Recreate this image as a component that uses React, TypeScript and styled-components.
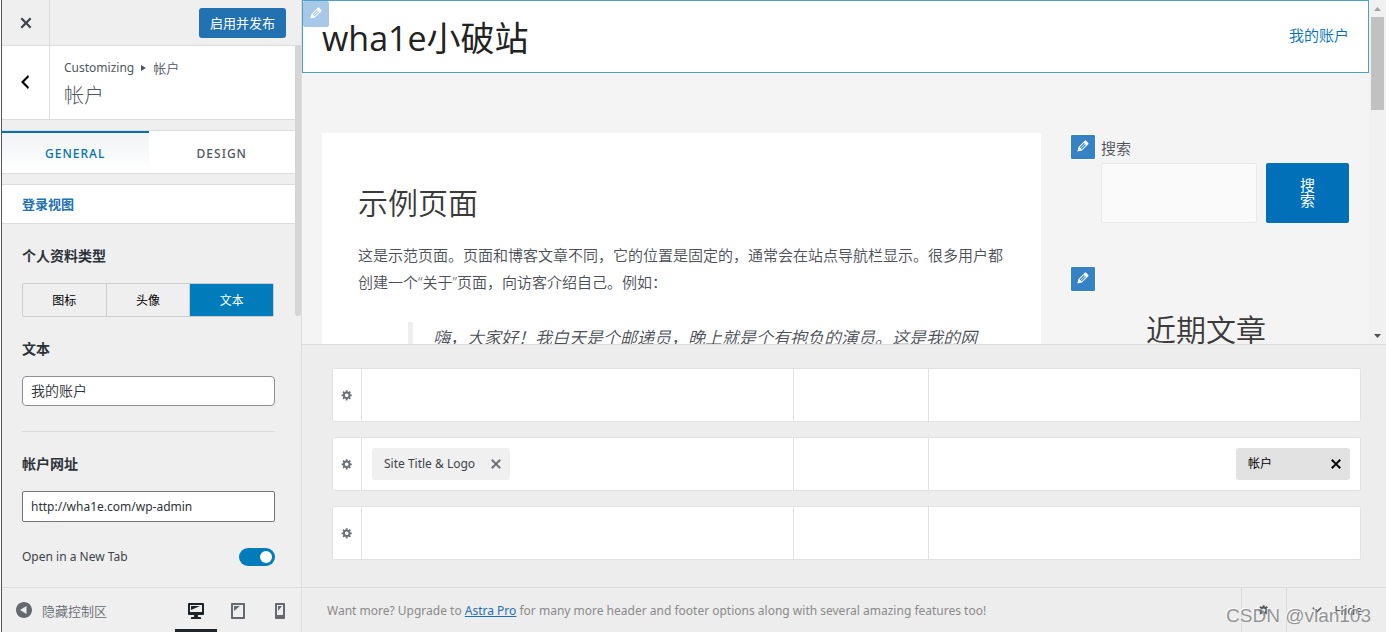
import React, { useState } from "react";
import styled, { createGlobalStyle } from "styled-components";

const GlobalStyle = createGlobalStyle`
  *, *::before, *::after { box-sizing: border-box; }
  body {
    margin: 0;
    background: #eeeeee;
    color: #3c434a;
    font-family: "Noto Sans", "Noto Sans CJK SC", sans-serif;
    font-size: 13px;
    line-height: 18px;
  }
  button, input { font-family: inherit; margin: 0; }
  button { cursor: pointer; }
  h1, h2, h3, p, blockquote { margin: 0; }
`;

/* ---------- icons ---------- */

const PATHS = {
  close:
    "M14.95 6.46L11.41 10l3.54 3.54-1.41 1.41L10 11.42l-3.53 3.53-1.42-1.42L8.58 10 5.05 6.47l1.42-1.42L10 8.58l3.54-3.53z",
  back: "M14 5l-5 5 5 5-1 2-7-7 7-7z",
  down: "M5 6l5 5 5-5 2 1-7 7-7-7z",
  desktop:
    "M3 2h14c.55 0 1 .45 1 1v10c0 .55-.45 1-1 1h-5v2h2c.55 0 1 .45 1 1v1H5v-1c0-.55.45-1 1-1h2v-2H3c-.55 0-1-.45-1-1V3c0-.55.45-1 1-1zm13 9V4H4v7h12zM5 5h9L5 9V5z",
  tablet:
    "M4 2h12c.55 0 1 .45 1 1v14c0 .55-.45 1-1 1H4c-.55 0-1-.45-1-1V3c0-.55.45-1 1-1zm11 14V4H5v12h10zM6 5h6l-6 5V5z",
  phone:
    "M6 2h8c.55 0 1 .45 1 1v14c0 .55-.45 1-1 1H6c-.55 0-1-.45-1-1V3c0-.55.45-1 1-1zm7 12V4H7v10h6zM8 5h4l-4 5V5z",
  gear: "M18 12h-2.18c-.17.7-.44 1.35-.81 1.93l1.54 1.54-2.1 2.1-1.54-1.54c-.58.36-1.23.63-1.91.79V19H8v-2.18c-.68-.16-1.33-.43-1.91-.79l-1.54 1.54-2.12-2.12 1.54-1.54c-.36-.58-.63-1.23-.79-1.91H1V9.03h2.17c.16-.7.44-1.35.8-1.94L2.43 5.55l2.1-2.1 1.54 1.54c.58-.37 1.24-.64 1.93-.81V2h3v2.18c.68.16 1.33.43 1.91.79l1.54-1.54 2.12 2.12-1.54 1.54c.36.59.64 1.24.8 1.94H18V12zm-8.5 1.5c1.66 0 3-1.34 3-3s-1.34-3-3-3-3 1.34-3 3 1.34 3 3 3z",
  edit: "M13.89 3.39l2.71 2.72c.46.46.42 1.24.03 1.64l-8.01 8.02-5.56 1.16 1.16-5.58s7.6-7.63 7.99-8.03c.39-.39 1.22-.39 1.68.07zm-2.73 2.79l-5.59 5.61 1.11 1.11 5.54-5.65zm-2.97 8.23l5.58-5.6-1.07-1.08-5.59 5.6z",
  collapse:
    "M10 2c4.42 0 8 3.58 8 8s-3.58 8-8 8-8-3.58-8-8 3.58-8 8-8zM12.5 6L6 10l6.5 4z",
};

const Svg = styled.svg`
  display: block;
  flex: none;
  fill: currentColor;
`;

const Icon = ({ name, size = 20 }: { name: keyof typeof PATHS; size?: number }) => (
  <Svg viewBox="0 0 20 20" width={size} height={size} aria-hidden="true">
    <path fillRule="evenodd" d={PATHS[name]} />
  </Svg>
);

/* ---------- shell ---------- */

const Shell = styled.div`
  display: flex;
  height: 100vh;
  min-height: 600px;
  overflow: hidden;
`;

const Sidebar = styled.aside`
  flex: none;
  display: flex;
  flex-direction: column;
  width: 302px;
  padding-left: 1px;
  background: #ffffff;
`;

const SidebarInner = styled.div`
  flex: 1;
  min-height: 0;
  display: flex;
  flex-direction: column;
  border-left: 1px solid #50575e;
  border-right: 1px solid #dcdcde;
  background: #efefef;
`;

const SidebarHeader = styled.header`
  flex: none;
  display: flex;
  align-items: center;
  justify-content: space-between;
  height: 46px;
  padding-right: 15px;
  border-bottom: 1px solid #dcdcde;
`;

const SideButton = styled.button`
  flex: none;
  display: flex;
  align-items: center;
  justify-content: center;
  align-self: stretch;
  width: 48px;
  padding: 0;
  border: 0;
  border-right: 1px solid #dcdcde;
  background: transparent;
  color: #3c434a;
`;

const BackButton = styled(SideButton)`
  padding: 0 2px 2px 0;
  color: #000000;
`;

const PublishButton = styled.button`
  height: 30px;
  padding: 0 11px;
  border: 0;
  border-radius: 3px;
  background: #2271b1;
  color: #ffffff;
  font-size: 13px;
  line-height: 30px;
`;

const Scroller = styled.div`
  flex: 1;
  min-height: 0;
  display: flex;
`;

const Panel = styled.div`
  flex: 1;
  min-width: 0;
  overflow: hidden;
`;

const PanelTrack = styled.div`
  width: 6px;
`;

const PanelThumb = styled.div`
  height: 270px;
  border-radius: 0 0 3px 3px;
  background: #d5d5d5;
`;

const SectionTitle = styled.div`
  display: flex;
  height: 74px;
  margin-bottom: 10px;
  border-bottom: 1px solid #dcdcde;
  background: #ffffff;
`;

const TitleText = styled.div`
  padding: 12px 14px;
  color: #50575e;
`;

const Crumb = styled.p`
  display: flex;
  align-items: center;
  gap: 7px;
  font-size: 12px;
  line-height: 20px;
`;

const CrumbCurrent = styled.span`
  font-size: 13px;
  font-weight: 350;
`;

const CrumbArrow = styled.span`
  border: solid transparent;
  border-width: 3px 0 3px 5px;
  border-left-color: #50575e;
`;

const PanelName = styled.h2`
  font-size: 20px;
  font-weight: 300;
  line-height: 36px;
`;

const Tabs = styled.div`
  display: flex;
  height: 44px;
  margin-bottom: 10px;
  border-top: 1px solid #dcdcde;
  border-bottom: 1px solid #dcdcde;
  background: #ffffff;
`;

const Tab = styled.button<{ $active?: boolean }>`
  flex: 1;
  padding: 0;
  border: 0;
  border-top: 2px solid ${(p) => (p.$active ? "#0073aa" : "transparent")};
  background: ${(p) => (p.$active ? "linear-gradient(#f1f3f5, #ffffff)" : "#ffffff")};
  color: ${(p) => (p.$active ? "#0073aa" : "#50575e")};
  font-size: 12px;
  font-weight: 500;
  letter-spacing: 1px;
`;

const GroupTitle = styled.h3`
  height: 40px;
  padding: 0 20px;
  border-top: 1px solid #dcdcde;
  border-bottom: 1px solid #dcdcde;
  background: #ffffff;
  color: #2271b1;
  font-size: 13px;
  font-weight: 700;
  line-height: 38px;
`;

const Controls = styled.div`
  padding: 22px 20px 0;
`;

const Field = styled.div<{ $divided?: boolean }>`
  padding-bottom: ${(p) => (p.$divided ? "25px" : "22px")};
  margin-bottom: ${(p) => (p.$divided ? "22px" : "0")};
  border-bottom: ${(p) => (p.$divided ? "1px solid #dcdcde" : "0")};
`;

const FieldLabel = styled.label`
  display: block;
  margin-bottom: 17px;
  color: #2c3338;
  font-size: 14px;
  font-weight: 700;
  line-height: 20px;
`;

const Segments = styled.div`
  display: flex;
  height: 34px;
  margin-right: 1px;
  border: 1px solid #cccccc;
  border-radius: 2px;
`;

const Segment = styled.button<{ $active?: boolean }>`
  flex: 1;
  padding: 0;
  border: 0;
  border-left: 1px solid #cccccc;
  background: ${(p) => (p.$active ? "#007cba" : "transparent")};
  color: ${(p) => (p.$active ? "#ffffff" : "#000000")};
  font-size: 12px;
  &:first-child { border-left: 0; }
`;

const TextInput = styled.input`
  display: block;
  width: 100%;
  height: 30px;
  padding: 0 8px 2px;
  border: 1px solid #8c8f94;
  border-radius: 4px;
  background: #ffffff;
  color: #2c3338;
  font-size: 14px;
  font-weight: 350;
`;

const UrlInput = styled(TextInput)`
  height: 31px;
  padding-bottom: 0;
  border-color: #757575;
  border-radius: 2px;
  font-size: 12px;
  font-weight: 400;
`;

const ToggleRow = styled.label`
  display: flex;
  align-items: center;
  justify-content: space-between;
  height: 26px;
  font-size: 12px;
`;

const Toggle = styled.input`
  appearance: none;
  width: 36px;
  height: 18px;
  border-radius: 9px;
  background: #8c8f94;
  &::before {
    content: "";
    display: block;
    width: 12px;
    height: 12px;
    margin: 3px;
    border-radius: 50%;
    background: #ffffff;
  }
  &:checked { background: #007cba; }
  &:checked::before { margin-left: 21px; }
`;

const SidebarFooter = styled.footer`
  flex: none;
  display: flex;
  align-items: stretch;
  justify-content: space-between;
  height: 45px;
  padding: 0 0 0 12px;
  border-top: 1px solid #dcdcde;
`;

const CollapseButton = styled.button`
  display: flex;
  align-items: center;
  gap: 8px;
  padding: 0;
  border: 0;
  background: transparent;
  color: #646970;
  font-size: 13px;
  font-weight: 350;
`;

const Devices = styled.div`
  display: flex;
`;

const DeviceButton = styled.button<{ $active?: boolean }>`
  display: flex;
  align-items: center;
  justify-content: center;
  width: 42px;
  padding: 5px 0 0;
  border: 0;
  border-bottom: 3px solid ${(p) => (p.$active ? "#1d2327" : "transparent")};
  background: transparent;
  color: ${(p) => (p.$active ? "#1d2327" : "#646970")};
`;

/* ---------- preview ---------- */

const Main = styled.main`
  flex: 1;
  min-width: 0;
  display: flex;
  flex-direction: column;
`;

const Preview = styled.div`
  flex: 1;
  min-height: 0;
  display: flex;
  background: #f4f4f4;
`;

const Site = styled.div`
  flex: 1;
  min-width: 0;
  overflow: hidden;
  color: #4b4f58;
  font-family: "Open Sans", "Noto Sans CJK SC", sans-serif;
  font-size: 15px;
  font-weight: 350;
`;

const SiteHeader = styled.header`
  position: relative;
  display: flex;
  align-items: center;
  justify-content: space-between;
  height: 73px;
  padding: 0 19px;
  border: 1px solid #4a9fcc;
  background: #ffffff;
`;

const SiteName = styled.h1`
  padding-top: 2px;
  color: #222222;
  font-size: 34px;
  font-weight: 400;
  line-height: 44px;
`;

const AccountLink = styled.a`
  padding-bottom: 4px;
  color: #0170b9;
  font-size: 15px;
  text-decoration: none;
`;

const EditButton = styled.button<{ $corner?: boolean }>`
  position: absolute;
  top: ${(p) => (p.$corner ? "0" : "1px")};
  left: ${(p) => (p.$corner ? "0" : "7px")};
  display: flex;
  align-items: center;
  justify-content: center;
  width: 26px;
  height: 26px;
  padding: 0 0 2px;
  border: ${(p) => (p.$corner ? "0" : "1px solid #ffffff")};
  border-radius: 2px;
  background: ${(p) => (p.$corner ? "#a7c8e6" : "#3582c4")};
  color: #ffffff;
`;

const SiteBody = styled.div`
  display: flex;
  padding: 60px 20px 0;
`;

const Article = styled.article`
  flex: 1;
  min-width: 0;
  padding: 48px 36px;
  background: #ffffff;
`;

const Heading = styled.h2`
  color: #3a3a3a;
  font-size: 30px;
  font-weight: 350;
  line-height: 44px;
`;

const Paragraph = styled.p`
  margin: 17px 0 26px;
  line-height: 27px;
`;

const Quote = styled.blockquote`
  margin-left: 50px;
  padding: 0 0 0 20px;
  border-left: 5px solid #eeeeee;
  font-size: 17px;
  font-style: italic;
  line-height: 32px;
`;

const Widgets = styled.div`
  flex: none;
  width: 308px;
  padding-left: 22px;
`;

const Widget = styled.section`
  position: relative;
  margin-bottom: 42px;
`;

const SearchForm = styled.form`
  padding-left: 38px;
`;

const SearchLabel = styled.label`
  display: block;
  line-height: 30px;
`;

const SearchRow = styled.div`
  display: flex;
  gap: 9px;
  height: 60px;
`;

const SearchInput = styled.input`
  flex: 1;
  min-width: 0;
  padding: 0 12px;
  border: 1px solid #eaeaea;
  border-radius: 2px;
  background: #fafafa;
  font-size: 15px;
`;

const SearchButton = styled.button`
  width: 83px;
  padding: 0 33px;
  border: 0;
  border-radius: 2px;
  background: #0170b9;
  color: #ffffff;
  font-size: 15px;
  font-weight: 400;
  line-height: 15px;
`;

const RecentTitle = styled(Heading)`
  padding-top: 43px;
  text-align: center;
`;

const ScrollTrack = styled.div`
  flex: none;
  display: flex;
  flex-direction: column;
  align-items: center;
  width: 17px;
  background: #f1f1f1;
`;

const ScrollThumb = styled.div`
  width: 13px;
  height: 93px;
  margin-bottom: auto;
  background: #c1c1c1;
`;

const ScrollArrow = styled.svg`
  display: block;
  width: 17px;
  height: 17px;
`;

/* ---------- header builder ---------- */

const Builder = styled.section`
  flex: none;
  display: flex;
  flex-direction: column;
  gap: 15px;
  padding: 23px 25px 27px 30px;
  border-top: 1px solid #dcdcde;
  background: #ededed;
`;

const BuilderRow = styled.div`
  display: grid;
  grid-template-columns: 29px minmax(0, 1fr) 135px minmax(0, 1fr);
  height: 54px;
  border: 1px solid #e2e2e2;
  border-radius: 2px;
  background: #ffffff;
`;

const RowSettings = styled.button`
  display: flex;
  align-items: center;
  justify-content: center;
  padding: 0;
  border: 0;
  border-right: 1px solid #e2e2e2;
  background: transparent;
  color: #6d7278;
`;

const Zone = styled.div<{ $end?: boolean }>`
  display: flex;
  align-items: center;
  justify-content: ${(p) => (p.$end ? "flex-end" : "flex-start")};
  padding: 0 10px;
  border-right: ${(p) => (p.$end ? "0" : "1px solid #e2e2e2")};
`;

const Chip = styled.div<{ $active?: boolean }>`
  display: flex;
  align-items: center;
  justify-content: space-between;
  width: ${(p) => (p.$active ? "114px" : "138px")};
  height: 32px;
  padding: 0 4px 0 12px;
  border-radius: 3px;
  background: ${(p) => (p.$active ? "#e2e2e2" : "#f0f0f0")};
  color: ${(p) => (p.$active ? "#000000" : "#3c434a")};
  font-size: 12px;
  line-height: 20px;
  white-space: nowrap;
`;

const ChipRemove = styled.button<{ $active?: boolean }>`
  padding: 0;
  border: 0;
  background: transparent;
  color: ${(p) => (p.$active ? "#000000" : "#6d7278")};
`;

const BuilderFooter = styled.footer`
  flex: none;
  position: relative;
  display: flex;
  align-items: stretch;
  height: 45px;
  padding-left: 25px;
  border-top: 1px solid #dcdcde;
  background: #ededed;
`;

const Upsell = styled.p`
  flex: 1;
  align-self: center;
  padding-top: 2px;
  color: #8a8a8a;
  font-size: 12px;
`;

const UpsellLink = styled.a`
  color: #2271b1;
`;

const FooterButton = styled.button<{ $wide?: boolean }>`
  display: flex;
  align-items: center;
  justify-content: center;
  gap: 10px;
  width: ${(p) => (p.$wide ? "100px" : "45px")};
  padding: 0;
  border: 0;
  border-left: 1px solid #dcdcde;
  background: transparent;
  color: #50575e;
  font-size: 13px;
`;

const Watermark = styled.span`
  position: absolute;
  right: 15px;
  bottom: 4px;
  color: rgba(130, 130, 130, 0.85);
  font-family: "Liberation Sans", sans-serif;
  font-size: 19px;
  line-height: 24px;
  text-shadow: -1px -1px 0 rgba(255, 255, 255, 0.8);
  pointer-events: none;
`;

const ROWS = [
  { id: "above", start: null, end: null },
  { id: "primary", start: "Site Title & Logo", end: "帐户" },
  { id: "below", start: null, end: null },
];

const PROFILE_TYPES = ["图标", "头像", "文本"];

export default function App() {
  const [profile, setProfile] = useState("文本");
  const [tab, setTab] = useState("GENERAL");
  return (
    <>
      <GlobalStyle />
      <Shell>
        <Sidebar>
          <SidebarInner>
            <SidebarHeader>
              <SideButton aria-label="Close">
                <Icon name="close" size={22} />
              </SideButton>
              <PublishButton>启用并发布</PublishButton>
            </SidebarHeader>
            <Scroller>
              <Panel>
                <SectionTitle>
                  <BackButton aria-label="Back">
                    <Icon name="back" />
                  </BackButton>
                  <TitleText>
                    <Crumb>
                      Customizing <CrumbArrow /> <CrumbCurrent>帐户</CrumbCurrent>
                    </Crumb>
                    <PanelName>帐户</PanelName>
                  </TitleText>
                </SectionTitle>
                <Tabs>
                  {["GENERAL", "DESIGN"].map((t) => (
                    <Tab key={t} $active={t === tab} onClick={() => setTab(t)}>
                      {t}
                    </Tab>
                  ))}
                </Tabs>
                <GroupTitle>登录视图</GroupTitle>
                <Controls>
                  <Field>
                    <FieldLabel as="div" id="profile-type">个人资料类型</FieldLabel>
                    <Segments role="group" aria-labelledby="profile-type">
                      {PROFILE_TYPES.map((t) => (
                        <Segment key={t} $active={t === profile} onClick={() => setProfile(t)}>
                          {t}
                        </Segment>
                      ))}
                    </Segments>
                  </Field>
                  <Field $divided>
                    <FieldLabel htmlFor="account-text">文本</FieldLabel>
                    <TextInput id="account-text" defaultValue="我的账户" />
                  </Field>
                  <Field>
                    <FieldLabel htmlFor="account-url">帐户网址</FieldLabel>
                    <UrlInput id="account-url" defaultValue="http://wha1e.com/wp-admin" />
                  </Field>
                  <ToggleRow>
                    Open in a New Tab
                    <Toggle type="checkbox" defaultChecked />
                  </ToggleRow>
                </Controls>
              </Panel>
              <PanelTrack aria-hidden="true">
                <PanelThumb />
              </PanelTrack>
            </Scroller>
            <SidebarFooter>
              <CollapseButton>
                <Icon name="collapse" />
                隐藏控制区
              </CollapseButton>
              <Devices>
                <DeviceButton $active aria-label="Desktop">
                  <Icon name="desktop" />
                </DeviceButton>
                <DeviceButton aria-label="Tablet">
                  <Icon name="tablet" />
                </DeviceButton>
                <DeviceButton aria-label="Mobile">
                  <Icon name="phone" />
                </DeviceButton>
              </Devices>
            </SidebarFooter>
          </SidebarInner>
        </Sidebar>

        <Main>
          <Preview>
            <Site>
              <SiteHeader>
                <EditButton $corner aria-label="Edit header">
                  <Icon name="edit" size={16} />
                </EditButton>
                <SiteName>wha1e小破站</SiteName>
                <AccountLink href="#account">我的账户</AccountLink>
              </SiteHeader>
              <SiteBody>
                <Article>
                  <Heading>示例页面</Heading>
                  <Paragraph>
                    这是示范页面。页面和博客文章不同，它的位置是固定的，通常会在站点导航栏显示。很多用户都创建一个“关于”页面，向访客介绍自己。例如：
                  </Paragraph>
                  <Quote>嗨，大家好！我白天是个邮递员，晚上就是个有抱负的演员。这是我的网</Quote>
                </Article>
                <Widgets>
                  <Widget>
                    <EditButton aria-label="Edit search widget">
                      <Icon name="edit" size={16} />
                    </EditButton>
                    <SearchForm onSubmit={(e) => e.preventDefault()}>
                      <SearchLabel htmlFor="site-search">搜索</SearchLabel>
                      <SearchRow>
                        <SearchInput id="site-search" type="search" />
                        <SearchButton>搜索</SearchButton>
                      </SearchRow>
                    </SearchForm>
                  </Widget>
                  <Widget>
                    <EditButton aria-label="Edit recent posts widget">
                      <Icon name="edit" size={16} />
                    </EditButton>
                    <RecentTitle>近期文章</RecentTitle>
                  </Widget>
                </Widgets>
              </SiteBody>
            </Site>
            <ScrollTrack aria-hidden="true">
              <ScrollArrow viewBox="0 0 17 17">
                <path d="M5 11h7L8.500 7z" fill="#a3a3a3" />
              </ScrollArrow>
              <ScrollThumb />
              <ScrollArrow viewBox="0 0 17 17">
                <path d="M5 7h7l-3.500 4z" fill="#505050" />
              </ScrollArrow>
            </ScrollTrack>
          </Preview>

          <Builder>
            {ROWS.map((row) => (
              <BuilderRow key={row.id}>
                <RowSettings aria-label={`Settings for ${row.id} row`}>
                  <Icon name="gear" size={12} />
                </RowSettings>
                <Zone>
                  {row.start && (
                    <Chip>
                      {row.start}
                      <ChipRemove aria-label={`Remove ${row.start}`}>
                        <Icon name="close" />
                      </ChipRemove>
                    </Chip>
                  )}
                </Zone>
                <Zone />
                <Zone $end>
                  {row.end && (
                    <Chip $active>
                      {row.end}
                      <ChipRemove $active aria-label={`Remove ${row.end}`}>
                        <Icon name="close" />
                      </ChipRemove>
                    </Chip>
                  )}
                </Zone>
              </BuilderRow>
            ))}
          </Builder>
          <BuilderFooter>
            <Upsell>
              Want more? Upgrade to <UpsellLink href="#astra-pro">Astra Pro</UpsellLink> for many more header and
              footer options along with several amazing features too!
            </Upsell>
            <FooterButton aria-label="Builder settings">
              <Icon name="gear" size={12} />
            </FooterButton>
            <FooterButton $wide>
              <Icon name="down" size={14} />
              Hide
            </FooterButton>
            <Watermark>CSDN @vlan103</Watermark>
          </BuilderFooter>
        </Main>
      </Shell>
    </>
  );
}
